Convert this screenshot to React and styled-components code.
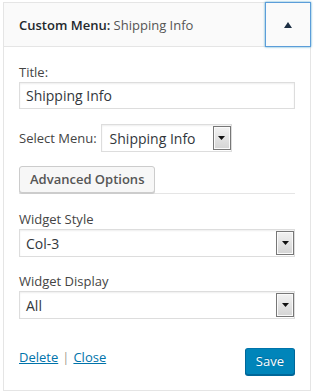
import React from "react";
import styled, { createGlobalStyle } from "styled-components";

const GlobalStyle = createGlobalStyle`
  body {
    margin: 0;
    background: #fff;
    font-family: "Open Sans", "Liberation Sans", sans-serif;
    font-size: 13px;
    color: #444;
  }
`;

const Panel = styled.div`
  box-sizing: border-box;
  width: 308px;
  margin: 2px 0 0 3px;
  border: 1px solid #e5e5e5;
  background: #fff;
`;

const Header = styled.div`
  display: flex;
  align-items: stretch;
  height: 43px;
  background: #fafafa;
  border-bottom: 1px solid #e5e5e5;
`;

const HeaderTitle = styled.h3`
  flex: 1;
  display: flex;
  align-items: center;
  margin: 0;
  padding-left: 15px;
  font-size: 13px;
  font-weight: 600;
  color: #23282d;
  white-space: pre;
`;

const InTitle = styled.span`
  font-weight: 400;
  color: #555;
`;

const Toggle = styled.button`
  width: 44px;
  border: 0;
  padding: 0;
  background: transparent;
  display: flex;
  align-items: center;
  justify-content: center;
  box-shadow: 0 0 0 1px #5b9dd9, 0 0 2px 1px rgba(30, 140, 190, 0.8);
  cursor: pointer;
`;

const Body = styled.div`
  padding: 16px 15px 15px;
`;

const Label = styled.label`
  display: block;
  line-height: 18px;
  margin-bottom: ${(p) => (p.$inline ? 0 : 1)}px;
  color: #444;
`;

const TextInput = styled.input`
  box-sizing: border-box;
  display: block;
  width: 100%;
  height: 27px;
  margin: 0;
  padding: 0 6px;
  border: 1px solid #ddd;
  box-shadow: inset 0 1px 2px rgba(0, 0, 0, 0.07);
  font-family: inherit;
  font-size: 14px;
  color: #32373c;
  outline: none;
`;

const InlineRow = styled.div`
  display: flex;
  align-items: center;
  gap: 4px;
  margin-top: 15px;
`;

const FieldBlock = styled.div`
  margin-top: ${(p) => p.$top}px;
`;

const Select = styled.div`
  box-sizing: border-box;
  display: flex;
  width: ${(p) => (p.$width ? `${p.$width}px` : "100%")};
  height: 28px;
  padding: 1px 0;
  border: 1px solid #ddd;
  background: #fff;
  box-shadow: inset 0 1px 2px rgba(0, 0, 0, 0.07);
`;

const SelectValue = styled.span`
  flex: 1;
  display: flex;
  align-items: center;
  padding-left: ${(p) => p.$pad}px;
  font-size: 14px;
  color: #32373c;
`;

const DropButton = styled.span`
  box-sizing: border-box;
  width: 18px;
  display: flex;
  align-items: center;
  justify-content: center;
  border: 1px solid #777;
  background: linear-gradient(#f2f2f2, #d4d4d4);
  box-shadow: inset 0 0 0 1px #fafafa;
`;

const AdvancedRow = styled.div`
  margin-top: 14px;
  border-bottom: 1px solid #e5e5e5;
  display: flex;
`;

const SecondaryButton = styled.button`
  box-sizing: border-box;
  height: 27px;
  padding: 0 10px 1px;
  border: 1px solid #ccc;
  border-radius: 3px;
  background: #f7f7f7;
  box-shadow: 0 1px 0 #ccc;
  font-family: inherit;
  font-size: 13px;
  font-weight: 600;
  color: #555;
  cursor: pointer;
`;

const Footer = styled.div`
  display: flex;
  justify-content: space-between;
  align-items: flex-start;
  margin-top: 29px;
`;

const Links = styled.div`
  line-height: 18px;
  color: #a0a5aa;
`;

const Link = styled.a`
  color: #0073aa;
  text-decoration: underline;
`;

const Sep = styled.span`
  margin: 0 4px;
  color: #a59d8f;
`;

const PrimaryButton = styled.button`
  box-sizing: border-box;
  height: 27px;
  padding: 0 10px 1px;
  border: 1px solid #0073aa;
  border-color: #0073aa #006799 #006799;
  border-radius: 3px;
  background: #0085ba;
  box-shadow: 0 1px 0 #006799;
  font-family: inherit;
  font-size: 13px;
  color: #fff;
  text-shadow: 0 -1px 1px #006799;
  cursor: pointer;
`;

function DownArrow() {
  return (
    <svg width="7" height="4" viewBox="0 0 7 4">
      <polygon points="0,0 7,0 3.5,4" fill="#111" />
    </svg>
  );
}

function FauxSelect({ value, width, pad = 6 }) {
  return (
    <Select $width={width}>
      <SelectValue $pad={pad}>{value}</SelectValue>
      <DropButton>
        <DownArrow />
      </DropButton>
    </Select>
  );
}

export default function App() {
  return (
    <>
      <GlobalStyle />
      <Panel>
        <Header>
          <HeaderTitle>
            Custom Menu:<InTitle> Shipping Info</InTitle>
          </HeaderTitle>
          <Toggle aria-label="Toggle widget">
            <svg width="8" height="6" viewBox="0 0 8 6">
              <polygon points="4,0 8,6 0,6" fill="#1d2f44" />
            </svg>
          </Toggle>
        </Header>
        <Body>
          <Label>Title:</Label>
          <TextInput defaultValue="Shipping Info" />

          <InlineRow>
            <Label as="span" $inline>
              Select Menu:
            </Label>
            <FauxSelect value="Shipping Info" width={131} pad={8} />
          </InlineRow>

          <AdvancedRow>
            <SecondaryButton>Advanced Options</SecondaryButton>
          </AdvancedRow>

          <FieldBlock $top={16}>
            <Label>Widget Style</Label>
            <FauxSelect value="Col-3" />
          </FieldBlock>

          <FieldBlock $top={15}>
            <Label>Widget Display</Label>
            <FauxSelect value="All" />
          </FieldBlock>

          <Footer>
            <Links>
              <Link href="#">Delete</Link>
              <Sep>|</Sep>
              <Link href="#">Close</Link>
            </Links>
            <PrimaryButton>Save</PrimaryButton>
          </Footer>
        </Body>
      </Panel>
    </>
  );
}
